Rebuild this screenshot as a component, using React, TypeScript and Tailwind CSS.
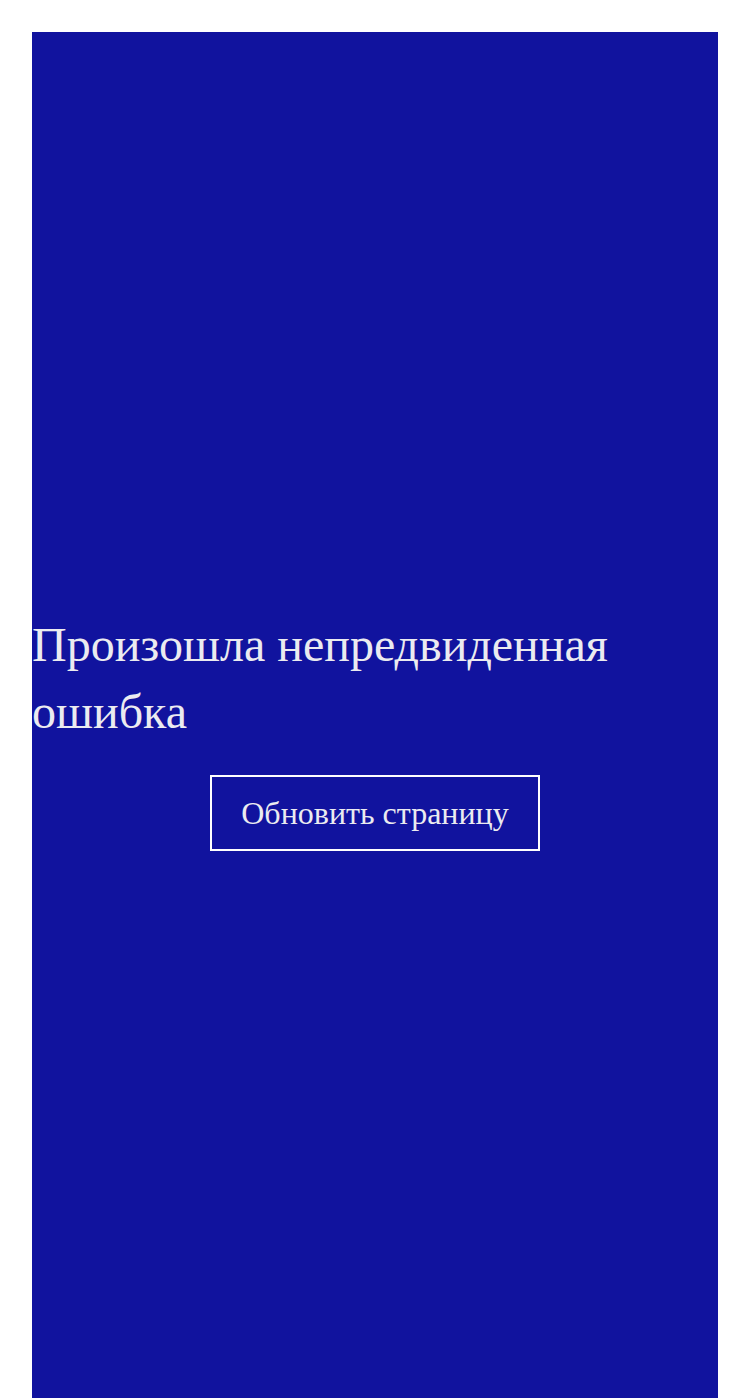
import React from "react";

const ErrorScreen: React.FC = () => {
  return (
    <div className="bg-white">
      <div
        className="m-8 mb-0 flex h-screen flex-col items-center justify-center bg-[#11139e] text-[#ebebf0]"
        style={{ fontFamily: '"Liberation Serif", "Times New Roman", serif' }}
      >
        {/* Message */}
        <h1 className="w-full text-left text-[48px] leading-[67px] font-normal">
          Произошла непредвиденная ошибка
        </h1>
        <button
          type="button"
          className="mt-[30px] h-[76px] w-[330px] border-2 border-white text-[32px] leading-none text-[#ebebf0]"
        >
          Обновить страницу
        </button>
      </div>
    </div>
  );
};

export default function App() {
  return <ErrorScreen />;
}
